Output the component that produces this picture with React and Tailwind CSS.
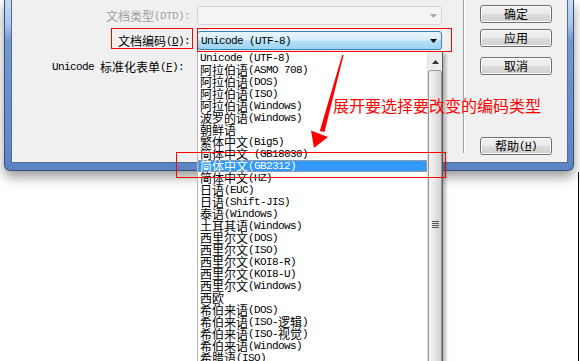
import React from "react";

// splits a string into CJK runs (12px Noto CJK) and latin runs (6px-wide mono, like SimSun)
const Mix = ({ s, u }) =>
  s
    .split(/([\u3400-\u9fff]+)/)
    .filter(Boolean)
    .map((p, i) =>
      /[\u3400-\u9fff]/.test(p) ? (
        <span key={i} className="inline-block align-top h-[12px] leading-[12px] font-['Noto_Sans_CJK_SC',sans-serif] text-[12px]">{p}</span>
      ) : (
        <span key={i} className={"inline-block align-top h-[12px] leading-[13px] font-['Liberation_Mono',monospace] text-[11px] tracking-[-0.6px] whitespace-pre " + (u ? "underline underline-offset-[1px]" : "")}>{p}</span>
      )
    );

const Key = ({ pre, k, post }) => (
  <>
    <Mix s={pre} />
    <Mix s={k} u />
    <Mix s={post} />
  </>
);

const items = [
  "Unicode (UTF-8)",
  "阿拉伯语(ASMO 708)",
  "阿拉伯语(DOS)",
  "阿拉伯语(ISO)",
  "阿拉伯语(Windows)",
  "波罗的语(Windows)",
  "朝鲜语",
  "繁体中文(Big5)",
  "简体中文 (GB18030)",
  "简体中文(GB2312)",
  "简体中文(HZ)",
  "日语(EUC)",
  "日语(Shift-JIS)",
  "泰语(Windows)",
  "土耳其语(Windows)",
  "西里尔文(DOS)",
  "西里尔文(ISO)",
  "西里尔文(KOI8-R)",
  "西里尔文(KOI8-U)",
  "西里尔文(Windows)",
  "西欧",
  "希伯来语(DOS)",
  "希伯来语(ISO-逻辑)",
  "希伯来语(ISO-视觉)",
  "希伯来语(Windows)",
  "希腊语(ISO)",
];

const btn =
  "h-[18px] w-[72px] rounded-[3px] border border-[#707070] shadow-[inset_0_0_0_1px_#fbfbfb] bg-[linear-gradient(to_bottom,#f2f2f2_0%,#ebebeb_50%,#dddddd_50%,#cfcfcf_100%)] flex items-center justify-center text-black";

const Arrow = ({ color }) => (
  <svg width="7" height="4" viewBox="0 0 7 4">
    <path d="M0 0h7L3.5 4z" fill={color} />
  </svg>
);

export default function App() {
  return (
    <div className="relative w-[580px] h-[361px] overflow-hidden bg-white">
      {/* dialog window */}
      <div className="absolute left-[4px] top-0 w-[570px] h-[171px] rounded-b-[6px] border border-t-0 border-[#34507a] bg-[linear-gradient(to_bottom,#c6dbf3_0px,#a9c6ec_24px,#7499d2_40px,#5c83c3_100%)] pl-[6px] pr-[5px] pb-[7px] shadow-[0_6px_12px_rgba(0,0,0,0.4)]">
        <div className="h-full border border-t-0 border-[#4f6c96] bg-[#f0f0f0] flex">
          {/* form */}
          <div className="w-[451px] flex flex-col gap-[6px] pt-[6px]">
            <div className="flex h-[19px] items-center">
              <div className="w-[178px] flex justify-end text-[#a0a0a0]">
                <Mix s="文档类型(DTD):" />
              </div>
              <div className="ml-[7px] w-[245px] h-[19px] rounded-[3px] border border-[#d5d5d5] bg-[#f4f4f4] flex items-center justify-end pr-[4px]">
                <Arrow color="#a8a8a8" />
              </div>
            </div>
            <div className="flex h-[19px] items-center">
              <div className="w-[178px] flex justify-end text-black">
                <Key pre="文档编码(" k="D" post="):" />
              </div>
              <div className="ml-[7px] w-[245px] h-[19px] rounded-[3px] border border-[#3c7fb1] bg-[linear-gradient(to_bottom,#e8f5fd_0%,#d6eefb_45%,#b3dff7_55%,#9dd3f2_100%)] flex items-center justify-between pl-[3px] pr-[4px]">
                <span className="flex"><Mix s="Unicode (UTF-8)" /></span>
                <Arrow color="#000" />
              </div>
            </div>
            <div className="flex h-[19px] items-center mt-[1px]">
              <div className="w-[178px] flex justify-end text-black pr-[6px]">
                <Key pre="Unicode 标准化表单(" k="F" post="):" />
              </div>
              <div className="ml-[7px] w-[245px] h-[19px] rounded-[3px] border border-[#acacac] bg-[#eeeeee]" />
            </div>
          </div>

          {/* separator */}
          <div className="w-[1px] h-[153px] bg-[#a0a0a0]" />
          <div className="w-[1px] h-[153px] bg-white" />

          {/* buttons */}
          <div className="ml-[15px] flex flex-col pt-[5px]">
            <div className={btn + " border-[#3c7fb1] bg-[linear-gradient(to_bottom,#eaf6fd_0%,#d9f0fc_50%,#bee6fd_50%,#a7d9f5_100%)]"}>
              <Mix s="确定" />
            </div>
            <div className={btn + " mt-[6px]"}>
              <Mix s="应用" />
            </div>
            <div className={btn + " mt-[10px]"}>
              <Mix s="取消" />
            </div>
            <div className={btn + " mt-[62px]"}>
              <Key pre="帮助(" k="H" post=")" />
            </div>
          </div>
        </div>
      </div>

      {/* right edge line */}
      <div className="absolute left-[578px] top-[172px] w-[1px] h-[189px] bg-black" />

      {/* dropdown list */}
      <div className="absolute left-[197px] top-[51px] w-[246px] h-[330px] bg-white border border-l-[#b4b4c8] border-y-[#646464] border-r-[#5a5a5a] shadow-[3px_3px_3px_rgba(0,0,0,0.25)] flex">
        <div className="w-[229px] flex flex-col text-black">
          {items.map((t, i) => (
            <div
              key={t}
              className={
                "h-[12px] flex pl-[2px] whitespace-nowrap " +
                (i === 9 ? "bg-[#3399ff] text-white outline outline-1 outline-dotted outline-[#e0a060] -outline-offset-1" : "")
              }
            >
              <Mix s={t} />
            </div>
          ))}
        </div>
        {/* scrollbar */}
        <div className="w-[15px] bg-[#ededed] border-l border-[#e0e0e0] flex flex-col">
          <div className="h-[18px] flex items-center justify-center pt-[2px]">
            <svg width="7" height="4" viewBox="0 0 7 4">
              <path d="M3.5 0L7 4H0z" fill="#333" />
            </svg>
          </div>
          <div className="flex-1 rounded-t-[3px] border border-[#979797] bg-[linear-gradient(to_right,#f4f4f4_0%,#e6e6e6_50%,#d2d2d2_100%)] flex flex-col items-center pt-[150px]">
            <div className="w-[7px] flex flex-col gap-[1px]">
              <div className="h-[1px] bg-[#555]" />
              <div className="h-[1px] bg-[#555]" />
              <div className="h-[1px] bg-[#555]" />
              <div className="h-[1px] bg-[#555]" />
            </div>
          </div>
        </div>
      </div>

      {/* annotation boxes */}
      <div className="absolute left-[111px] top-[28px] w-[82px] h-[21px] border border-[#ff0000]" />
      <div className="absolute left-[197px] top-[28px] w-[255px] h-[24px] border border-[#ff0000]" />
      <div className="absolute left-[176px] top-[152px] w-[270px] h-[26px] border border-[#ff0000]" />

      {/* annotation arrow */}
      <svg className="absolute left-0 top-0" width="580" height="361" viewBox="0 0 580 361">
        <polygon points="342.2,55 343.6,55 324.5,132 319.8,131" fill="#ff0000" />
        <polygon points="311,130.5 328,137 314,148" fill="#ff0000" />
      </svg>

      {/* annotation text */}
      <div className="absolute left-[333px] top-[97px] font-['Noto_Sans_CJK_SC',sans-serif] text-[16px] leading-[16px] text-[#ff0000] whitespace-nowrap">
        展开要选择要改变的编码类型
      </div>
    </div>
  );
}
